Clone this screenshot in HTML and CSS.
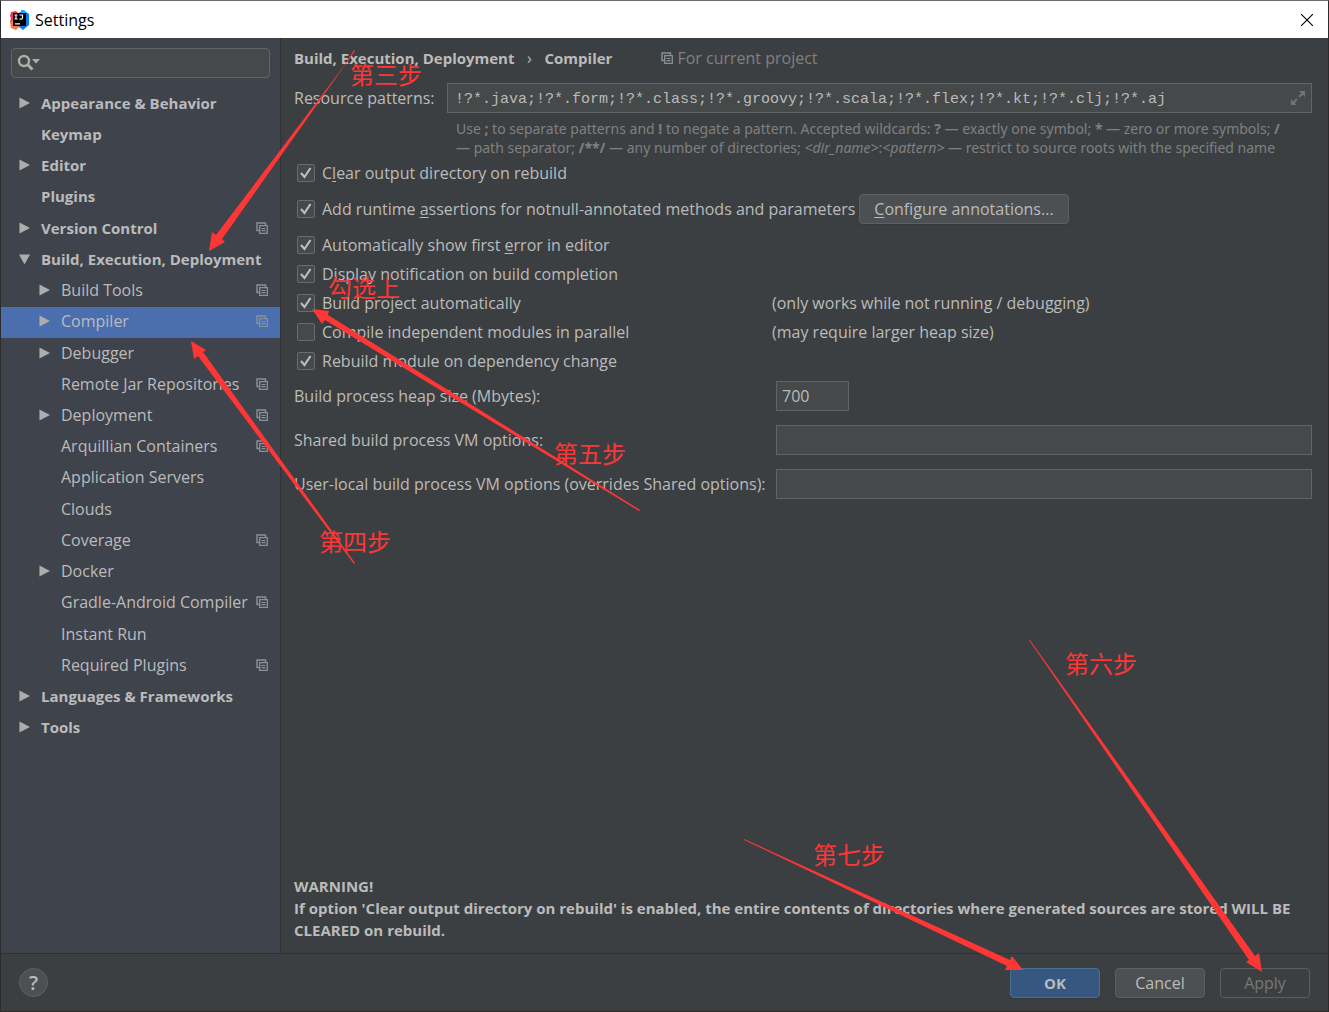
FILE: index.html
```html
<!DOCTYPE html>
<html lang="en">
<head>
<meta charset="utf-8">
<title>Settings</title>
<meta name="viewport" content="width=device-width, initial-scale=1">
<link rel="stylesheet" href="styles.css">
</head>
<body>
<svg class="defs" aria-hidden="true">
  <symbol id="project" viewBox="0 0 12 12">
    <path d="M3 8.500H1V1h8.500V3" fill="none" stroke="currentColor" stroke-width="1.400"/>
    <path d="M3.700 3.700h7.600v7.600H3.700z" fill="none" stroke="currentColor" stroke-width="1.300"/>
    <path d="M5.500 6.500h4M5.500 8.600h4" stroke="currentColor" stroke-width="1.100"/>
  </symbol>
  <symbol id="closed" viewBox="0 0 12 12"><path d="M.5 0L12 6L.5 12z" fill="currentColor"/></symbol>
  <symbol id="open" viewBox="0 0 12 12"><path d="M0 1H12L6 12z" fill="currentColor"/></symbol>
</svg>

<div class="window">
  <header class="titlebar">
    <svg class="app-icon" viewBox="0 0 20 20" aria-hidden="true">
      <path d="M1 2l5-1 3 3-3 10-6-2 1-4L0 6z" fill="#f5325b"/>
      <path d="M0 12l6-4 3 9-3 3-5-2z" fill="#f97a3d"/>
      <path d="M9 3l4-3 6 4v11l-6 5-4-3z" fill="#0a7cf0"/>
      <path d="M11 0h3l3 3h-6z" fill="#23a6f7"/>
      <path d="M3 3h13v13H3z" fill="#000"/>
      <path d="M4.500 5h3M6 5v4M4.500 9h3M9.500 5h3v3q0 1.200-1.500 1.200H9.500M5 13.800h5" fill="none" stroke="#fff" stroke-width="1.200"/>
    </svg>
    <h1 class="title">Settings</h1>
    <button class="close" type="button" aria-label="Close">
      <svg viewBox="0 0 12 12" aria-hidden="true"><path d="M0 0l12 12M12 0L0 12" stroke="#000" stroke-width="1.100"/></svg>
    </button>
  </header>

  <div class="body">
    <nav class="sidebar" aria-label="Settings categories">
      <div class="search">
        <svg viewBox="0 0 24 18" aria-hidden="true">
          <circle cx="7" cy="7" r="5" fill="none" stroke="#adadad" stroke-width="2.400"/>
          <path d="M10.500 10.500l5 5" stroke="#adadad" stroke-width="3"/>
          <path d="M15 5h8l-4 4.500z" fill="#adadad"/>
        </svg>
        <input type="text" aria-label="Search settings">
      </div>
      <ul class="tree">
        <li class="group"><svg class="arrow"><use href="#closed"/></svg><a href="#">Appearance &amp; Behavior</a></li>
        <li class="group"><span class="arrow"></span><a href="#">Keymap</a></li>
        <li class="group"><svg class="arrow"><use href="#closed"/></svg><a href="#">Editor</a></li>
        <li class="group"><span class="arrow"></span><a href="#">Plugins</a></li>
        <li class="group"><svg class="arrow"><use href="#closed"/></svg><a href="#">Version Control</a><svg class="badge"><use href="#project"/></svg></li>
        <li class="group"><svg class="arrow"><use href="#open"/></svg><a href="#">Build, Execution, Deployment</a></li>
        <li class="child"><svg class="arrow"><use href="#closed"/></svg><a href="#">Build Tools</a><svg class="badge"><use href="#project"/></svg></li>
        <li class="child selected"><svg class="arrow"><use href="#closed"/></svg><a href="#" aria-current="page">Compiler</a><svg class="badge"><use href="#project"/></svg></li>
        <li class="child"><svg class="arrow"><use href="#closed"/></svg><a href="#">Debugger</a></li>
        <li class="child"><span class="arrow"></span><a href="#">Remote Jar Repositories</a><svg class="badge"><use href="#project"/></svg></li>
        <li class="child"><svg class="arrow"><use href="#closed"/></svg><a href="#">Deployment</a><svg class="badge"><use href="#project"/></svg></li>
        <li class="child"><span class="arrow"></span><a href="#">Arquillian Containers</a><svg class="badge"><use href="#project"/></svg></li>
        <li class="child"><span class="arrow"></span><a href="#">Application Servers</a></li>
        <li class="child"><span class="arrow"></span><a href="#">Clouds</a></li>
        <li class="child"><span class="arrow"></span><a href="#">Coverage</a><svg class="badge"><use href="#project"/></svg></li>
        <li class="child"><svg class="arrow"><use href="#closed"/></svg><a href="#">Docker</a></li>
        <li class="child"><span class="arrow"></span><a href="#">Gradle-Android Compiler</a><svg class="badge"><use href="#project"/></svg></li>
        <li class="child"><span class="arrow"></span><a href="#">Instant Run</a></li>
        <li class="child"><span class="arrow"></span><a href="#">Required Plugins</a><svg class="badge"><use href="#project"/></svg></li>
        <li class="group"><svg class="arrow"><use href="#closed"/></svg><a href="#">Languages &amp; Frameworks</a></li>
        <li class="group"><svg class="arrow"><use href="#closed"/></svg><a href="#">Tools</a></li>
      </ul>
    </nav>

    <main class="content">
      <div class="crumbs">
        <h2>Build, Execution, Deployment</h2><span class="sep">›</span><h2>Compiler</h2>
        <span class="scope"><svg class="badge"><use href="#project"/></svg>For current project</span>
      </div>

      <div class="patterns">
        <label for="patterns">Resource patterns:</label>
        <div class="expandable">
          <input id="patterns" type="text" value="!?*.java;!?*.form;!?*.class;!?*.groovy;!?*.scala;!?*.flex;!?*.kt;!?*.clj;!?*.aj">
          <svg viewBox="0 0 16 16" aria-hidden="true">
            <path d="M9 1h6v6zM1 9v6h6z" fill="#6d7376"/>
            <path d="M9 7l4-4M3 13l4-4" stroke="#6d7376" stroke-width="2"/>
          </svg>
        </div>
        <p class="hint">Use <b>;</b> to separate patterns and <b>!</b> to negate a pattern. Accepted wildcards: <b>?</b> — exactly one symbol; <b>*</b> — zero or more symbols; <b>/</b> — path separator; <b>/**/</b> — any number of directories; <i>&lt;dir_name&gt;</i>:<i>&lt;pattern&gt;</i> — restrict to source roots with the specified name</p>
      </div>

      <div class="options">
        <label class="check"><input type="checkbox" checked><span>C<u>l</u>ear output directory on rebuild</span></label>
      </div>
      <div class="options inline">
        <label class="check"><input type="checkbox" checked><span>Add runtime <u>a</u>ssertions for notnull-annotated methods and parameters</span></label>
        <button class="btn configure" type="button"><u>C</u>onfigure annotations...</button>
      </div>
      <div class="options">
        <label class="check"><input type="checkbox" checked><span>Automatically show first <u>e</u>rror in editor</span></label>
        <label class="check"><input type="checkbox" checked><span>Display notification on build completion</span></label>
        <div class="noted">
          <label class="check"><input type="checkbox" checked><span>Build project automatically</span></label>
          <span>(only works while not running / debugging)</span>
        </div>
        <div class="noted">
          <label class="check"><input type="checkbox"><span>Compile independent modules in parallel</span></label>
          <span>(may require larger heap size)</span>
        </div>
        <label class="check"><input type="checkbox" checked><span>Rebuild module on dependency change</span></label>
      </div>

      <div class="fields">
        <label for="heap">Build process heap size (Mbytes):</label>
        <input id="heap" class="short" type="text" value="700">
        <label for="shared">Shared build process VM options:</label>
        <input id="shared" type="text">
        <label for="local">User-local build process VM options (overrides Shared options):</label>
        <input id="local" type="text">
      </div>

      <p class="warning">WARNING!<br>If option 'Clear output directory on rebuild' is enabled, the entire contents of directories where generated sources are stored WILL BE CLEARED on rebuild.</p>
    </main>
  </div>

  <footer class="footer">
    <button class="help" type="button" aria-label="Help">?</button>
    <button class="btn primary" type="button">OK</button>
    <button class="btn" type="button">Cancel</button>
    <button class="btn" type="button" disabled>Apply</button>
  </footer>
</div>

<svg class="notes" aria-label="Step annotations">
  <path d="M209 251L212 232L216 235L344 66L354 50L355 51L222 239L225 242z"/>
  <path d="M191 341L206 350L203 352L355 563L354 564L198 356L194 359z"/>
  <path d="M312 309L329 311L328 315L640 510L639 511L325 320L322 324z"/>
  <path d="M1262 972L1246 962L1249 960L1029 640L1030 640L1255 956L1259 953z"/>
  <path d="M1023 970L1005 970L1007 966L744 840L744 839L1010 960L1012 956z"/>
  <text x="350" y="84">第三步</text>
  <text x="328" y="297">勾选上</text>
  <text x="554" y="463">第五步</text>
  <text x="319" y="551">第四步</text>
  <text x="1065" y="673">第六步</text>
  <text x="813" y="864">第七步</text>
</svg>
</body>
</html>
```
FILE: styles.css
```css
* { box-sizing: border-box; }

:root {
  --panel: #3c3f41;
  --side: #3f434c;
  --field: #45494a;
  --line: #646464;
  --rule: #323232;
  --text: #bbbbbb;
  --muted: #808080;
}

body {
  margin: 0;
  background: var(--panel);
  color: var(--text);
  font: 16px/22px "Open Sans", "Noto Sans CJK SC", sans-serif;
}

h1, h2, p, ul { margin: 0; padding: 0; font-size: inherit; }
h2 { font-size: 15px; font-weight: 700; }
button, input { font: inherit; color: inherit; }
a { color: inherit; text-decoration: none; }
u { text-decoration-thickness: 1px; text-underline-offset: 2px; }

.defs { display: none; }

.window {
  display: flex;
  flex-direction: column;
  min-height: 100vh;
  border: 1px solid #2b2b2b;
  border-top-color: #6b6b6b;
}

.titlebar {
  display: flex;
  align-items: center;
  height: 37px;
  padding: 0 15px 0 9px;
  background: #fff;
  color: #000;
}
.app-icon { width: 20px; height: 20px; }
.title { flex: 1; margin-left: 5px; font-weight: 400; }
.close { display: flex; padding: 0; border: 0; background: none; }
.close svg { width: 12px; height: 12px; }

.body { display: flex; flex: 1; }

.sidebar {
  flex: none;
  width: 280px;
  padding-top: 10px;
  background: var(--side);
  border-right: 1px solid var(--rule);
}
.search {
  display: flex;
  align-items: center;
  height: 30px;
  margin: 0 10px;
  padding-left: 5px;
  background: var(--field);
  border: 1px solid var(--line);
  border-radius: 4px;
}
.search svg { flex: none; width: 24px; height: 18px; }
.search input { flex: 1; min-width: 0; border: 0; background: none; outline: 0; }

.tree {
  display: grid;
  grid-template-columns: minmax(0, 1fr);
  grid-auto-rows: 1fr;
  height: 656px;
  margin-top: 10px;
  list-style: none;
}
.tree li {
  display: flex;
  align-items: center;
  gap: 11px;
  padding: 0 12px 2px 18px;
  white-space: nowrap;
}
.tree a { flex: 1; min-width: 0; }
.tree .group { font-size: 15px; font-weight: 700; }
.tree .child { padding-left: 38px; }
.tree .selected { background: #4b6eaf; }
.arrow { flex: none; width: 11px; height: 12px; color: #adadad; }
.badge { flex: none; width: 12px; height: 12px; color: #87939a; }

.content {
  display: flex;
  flex: 1;
  flex-direction: column;
  min-width: 0;
  padding: 9px 16px 12px 13px;
}

.crumbs { display: flex; align-items: center; height: 22px; }
.crumbs .sep { width: 30px; text-align: center; }
.scope { display: flex; align-items: center; gap: 4px; margin-left: 49px; color: var(--muted); }

.patterns {
  display: grid;
  grid-template-columns: 153px 1fr;
  align-items: center;
  margin-top: 14px;
}
.expandable {
  display: flex;
  align-items: center;
  height: 30px;
  padding: 0 5px 0 7px;
  background: var(--field);
  border: 1px solid var(--line);
}
.expandable input {
  flex: 1;
  min-width: 0;
  padding: 2px 0 0;
  border: 0;
  outline: 0;
  background: none;
  font: 15px "Liberation Mono", monospace;
}
.expandable svg { flex: none; width: 16px; height: 16px; }
.hint {
  grid-column: 2;
  margin: 6px 0 0;
  padding: 0 20px 0 9px;
  color: var(--muted);
  font: 14px/19px "Noto Sans", sans-serif;
}

.options { margin-top: 1px; }
.options.inline { display: flex; align-items: center; gap: 4px; height: 31px; margin-top: 6px; }
.options.inline + .options { margin-top: 6px; }
.check { display: flex; align-items: center; gap: 7px; height: 29px; padding-left: 3px; }
.check input {
  flex: none;
  width: 18px;
  height: 18px;
  margin: 0;
  appearance: none;
  background: var(--field);
  border: 1px solid #6b6b6b;
  border-radius: 2px;
}
.check input:checked {
  background: var(--field) url("data:image/svg+xml,%3Csvg xmlns='http://www.w3.org/2000/svg' viewBox='0 0 16 16'%3E%3Cpath d='M3 8l3.500 4L12.500 3' fill='none' stroke='%23bbbbbb' stroke-width='2.200'/%3E%3C/svg%3E") center / 16px no-repeat;
}
.noted { display: grid; grid-template-columns: 478px 1fr; align-items: center; }

.fields {
  display: grid;
  grid-template-columns: 482px 1fr;
  align-items: center;
  row-gap: 14px;
  margin-top: 6px;
}
.fields label { white-space: nowrap; }
.fields input {
  width: 100%;
  height: 30px;
  padding: 0 5px;
  background: var(--field);
  border: 1px solid var(--line);
}
.fields .short { width: 73px; }

.warning { margin-top: auto; font-size: 15px; font-weight: 700; }

.btn {
  min-width: 90px;
  height: 30px;
  padding: 0 14px;
  background: #4c5052;
  border: 1px solid #5e6162;
  border-radius: 4px;
  box-shadow: 0 1px 1px #353739;
}
.btn.primary { background: #365880; border-color: #4c708c; font-size: 15px; font-weight: 700; }
.btn:disabled { background: none; border-color: #5c5f61; box-shadow: none; color: #777777; }

.footer {
  display: flex;
  align-items: center;
  gap: 15px;
  height: 58px;
  padding: 0 18px;
  border-top: 1px solid var(--rule);
}
.help {
  width: 29px;
  height: 29px;
  margin-right: auto;
  padding: 0;
  border: 1px solid #5e6162;
  border-radius: 50%;
  background: #4c5052;
  font-size: 20px;
  font-weight: 600;
}

/* Hand-drawn step markers lie over the dialog. */
.notes {
  position: absolute;
  top: 0;
  left: 0;
  width: 100%;
  height: 100%;
  fill: #ff3636;
  font-family: "Noto Sans CJK SC", sans-serif;
  font-size: 24px;
  pointer-events: none;
}
```
